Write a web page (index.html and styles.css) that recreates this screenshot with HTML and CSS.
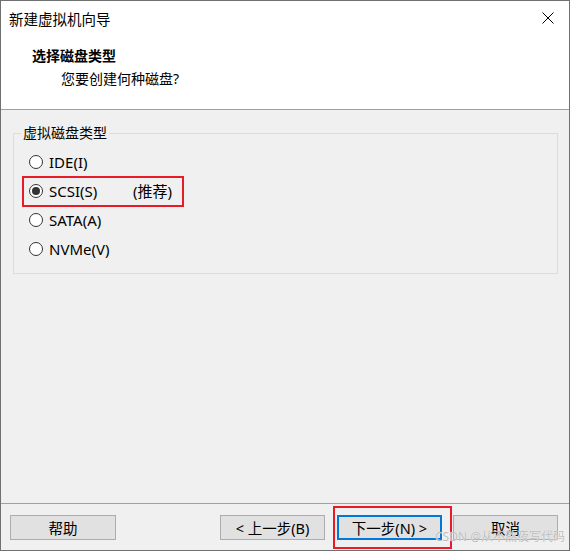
FILE: index.html
```html
<!DOCTYPE html>
<html lang="zh-CN">

<head>
    <meta charset="UTF-8">
    <title>新建虚拟机向导</title>
    <link rel="stylesheet" href="styles.css">
</head>

<body>
    <div class="window">
        <div class="top">
            <div class="titlebar">
                <span class="title">新建虚拟机向导</span>
                <svg class="close" width="12" height="12" viewBox="0 0 12 12">
                    <path d="M0.5 0.5 L11.5 11.5 M11.5 0.5 L0.5 11.5" stroke="#000" stroke-width="1" fill="none" />
                </svg>
            </div>
            <div class="header">
                <h1>选择磁盘类型</h1>
                <p>您要创建何种磁盘?</p>
            </div>
        </div>

        <div class="content">
            <fieldset class="group">
                <legend>虚拟磁盘类型</legend>
                <div class="option">
                    <span class="radio"></span>
                    <span class="label">IDE(I)</span>
                </div>
                <div class="option marked">
                    <span class="radio checked"></span>
                    <span class="label">SCSI(S)</span>
                    <span class="hint">(推荐)</span>
                </div>
                <div class="option">
                    <span class="radio"></span>
                    <span class="label">SATA(A)</span>
                </div>
                <div class="option">
                    <span class="radio"></span>
                    <span class="label">NVMe(V)</span>
                </div>
            </fieldset>
        </div>

        <div class="footer">
            <button class="btn help">帮助</button>
            <button class="btn back">&lt; 上一步(B)</button>
            <span class="marked-btn">
                <button class="btn next">下一步(N) &gt;</button>
            </span>
            <button class="btn cancel">取消</button>
            <span class="watermark">CSDN @从不熬夜写代码</span>
        </div>
    </div>
</body>

</html>
```

FILE: styles.css
```css
body {
    margin: 0;
    background: #f0f0f0;
    font-family: "Noto Sans", "Noto Sans CJK SC", sans-serif;
    font-size: 14px;
    line-height: 20px;
    color: #000;
}

.window {
    position: relative;
    box-sizing: border-box;
    width: 570px;
    height: 551px;
    border: 1px solid #707070;
    display: flex;
    flex-direction: column;
    background: #f0f0f0;
}

/* White title bar and wizard header share one panel. */
.top {
    height: 109px;
    background: #fff;
    border-bottom: 1px solid #a0a0a0;
    box-sizing: border-box;
}

.titlebar {
    display: flex;
    justify-content: space-between;
    align-items: flex-start;
    padding: 8px 15px 0 8px;
    font-size: 14.5px;
}

.close {
    margin-top: 3px;
}

.header {
    padding-left: 31px;
}

.header h1 {
    margin: 17px 0 0 0;
    font-size: 14px;
    font-weight: bold;
    line-height: 20px;
}

.header p {
    margin: 3px 0 0 29px;
}

.content {
    flex: 1;
    padding: 13px 11px 0 12px;
}

.group {
    margin: 0;
    padding: 4px 0 10px 0;
    border: 1px solid #dcdcdc;
}

.group legend {
    margin-left: 7px;
    padding: 0 2px;
    line-height: 20px;
}

.option {
    position: relative;
    display: flex;
    align-items: center;
    height: 29px;
    width: 147px;
    margin-left: 15px;
    font-size: 15px;
}

.radio {
    box-sizing: border-box;
    width: 14px;
    height: 14px;
    border: 1px solid #333;
    border-radius: 50%;
    background: #fff;
    margin-right: 6px;
    display: flex;
    align-items: center;
    justify-content: center;
}

.radio.checked::after {
    content: "";
    width: 8px;
    height: 8px;
    border-radius: 50%;
    background: #333;
}

.label {
    min-width: 84px;
}

/* Red annotation boxes drawn over the dialog. */
.marked::after,
.marked-btn::after {
    content: "";
    position: absolute;
    border: 2px solid #e81c28;
    pointer-events: none;
}

.marked::after {
    left: -7px;
    top: 0;
    width: 158px;
    height: 27px;
}

.footer {
    position: relative;
    display: flex;
    align-items: flex-start;
    height: 47px;
    box-sizing: border-box;
    border-top: 1px solid #a0a0a0;
    padding: 11px 0 0 9px;
}

.btn {
    box-sizing: border-box;
    height: 25px;
    width: 105px;
    margin: 0;
    padding: 0;
    background: #e1e1e1;
    border: 1px solid #adadad;
    font-family: inherit;
    font-size: 14.5px;
    color: #000;
}

.help {
    width: 106px;
}

.back {
    margin-left: 104px;
}

.marked-btn {
    position: relative;
    display: flex;
    margin-left: 12px;
}

.marked-btn::after {
    left: -4px;
    top: -9px;
    width: 115px;
    height: 39px;
}

.next {
    border: 2px solid #0078d7;
}

.cancel {
    margin-left: 11px;
}

.watermark {
    position: absolute;
    right: 4px;
    bottom: 6px;
    font-size: 12px;
    line-height: 14px;
    color: #bdbdbd;
    text-shadow: 0 0 1px #fff;
}
```
